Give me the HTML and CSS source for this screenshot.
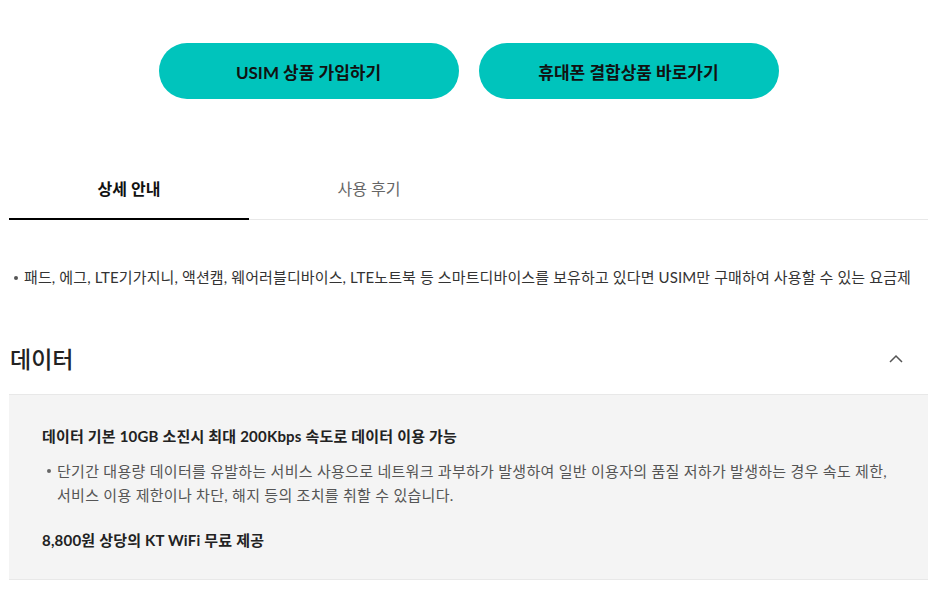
FILE: index.html
```html
<!DOCTYPE html>
<html lang="ko">
<head>
    <meta charset="UTF-8">
    <meta name="viewport" content="width=device-width, initial-scale=1.0">
    <title>USIM 요금제 상세</title>
    <link rel="stylesheet" href="styles.css">
</head>
<body>
    <div class="page">
        <div class="btn-row">
            <a class="btn-main" href="#">USIM 상품 가입하기</a>
            <a class="btn-main" href="#">휴대폰 결합상품 바로가기</a>
        </div>

        <div class="tabs">
            <a class="tab active" href="#">상세 안내</a>
            <a class="tab" href="#">사용 후기</a>
        </div>

        <ul class="intro">
            <li>패드, 에그, LTE기가지니, 액션캠, 웨어러블디바이스, LTE노트북 등 스마트디바이스를 보유하고 있다면 USIM만 구매하여 사용할 수 있는 요금제</li>
        </ul>

        <div class="acc">
            <div class="acc-head">
                <h2>데이터</h2>
                <svg class="chev" width="14" height="9" viewBox="0 0 14 9">
                    <path d="M1 8 L7 2 L13 8" fill="none" stroke="#555" stroke-width="1.5"/>
                </svg>
            </div>
            <div class="acc-body">
                <p class="strong">데이터 기본 10GB 소진시 최대 200Kbps 속도로 데이터 이용 가능</p>
                <ul class="notes">
                    <li>단기간 대용량 데이터를 유발하는 서비스 사용으로 네트워크 과부하가 발생하여 일반 이용자의 품질 저하가 발생하는 경우 속도 제한,<br>서비스 이용 제한이나 차단, 해지 등의 조치를 취할 수 있습니다.</li>
                </ul>
                <p class="strong last">8,800원 상당의 KT WiFi 무료 제공</p>
            </div>
        </div>
    </div>
</body>
</html>
```

FILE: styles.css
```css
body {
    margin: 0;
    font-family: Lato, "Noto Sans CJK KR", sans-serif;
    color: #222;
    background: #fff;
}
a {
    text-decoration: none;
    color: inherit;
}
ul {
    margin: 0;
    padding: 0;
    list-style: none;
}
.page {
    padding: 0 9px;
}
.btn-row {
    display: flex;
    justify-content: center;
    gap: 20px;
    padding-top: 43px;
}
.btn-main {
    width: 300px;
    height: 56px;
    border-radius: 28px;
    background: #00c4bc;
    color: #111;
    font-size: 17px;
    font-weight: 700;
    display: flex;
    align-items: center;
    justify-content: center;
}
.tabs {
    display: flex;
    margin-top: 61px;
    border-bottom: 1px solid #e8e8e8;
}
.tab {
    width: 240px;
    height: 59px;
    line-height: 58px;
    text-align: center;
    font-size: 16px;
    color: #666;
    margin-bottom: -1px;
}
.tab.active {
    color: #111;
    font-weight: 700;
    border-bottom: 2px solid #000;
    height: 58px;
}
.intro {
    margin-top: 46px;
}
.intro li,
.notes li {
    position: relative;
    padding-left: 15px;
    font-size: 15px;
    line-height: 22px;
    color: #333;
    letter-spacing: 0.12px;
}
.intro li::before,
.notes li::before {
    content: "";
    position: absolute;
    left: 5px;
    top: 10px;
    width: 4px;
    height: 4px;
    border-radius: 50%;
    background: #555;
}
.acc {
    margin-top: 42px;
}
.acc-head {
    display: flex;
    align-items: center;
    justify-content: space-between;
    height: 56px;
    padding-bottom: 8px;
    border-bottom: 1px solid #e8e8e8;
}
.acc-head h2 {
    margin: 0;
    font-size: 23px;
    font-weight: 500;
    color: #222;
    padding-left: 1px;
}
.chev {
    margin-right: 25px;
}
.acc-body {
    background: #f4f4f4;
    border-bottom: 1px solid #e8e8e8;
    padding: 30px 33px 28px;
}
.strong {
    margin: 0;
    font-size: 15px;
    font-weight: 700;
    line-height: 22px;
    color: #222;
    letter-spacing: 0.2px;
}
.notes {
    margin-top: 12px;
}
.notes li {
    line-height: 24px;
    color: #555;
    letter-spacing: 0.28px;
}
.notes li::before {
    top: 10px;
    background: #666;
}
.strong.last {
    margin-top: 22px;
}
```
